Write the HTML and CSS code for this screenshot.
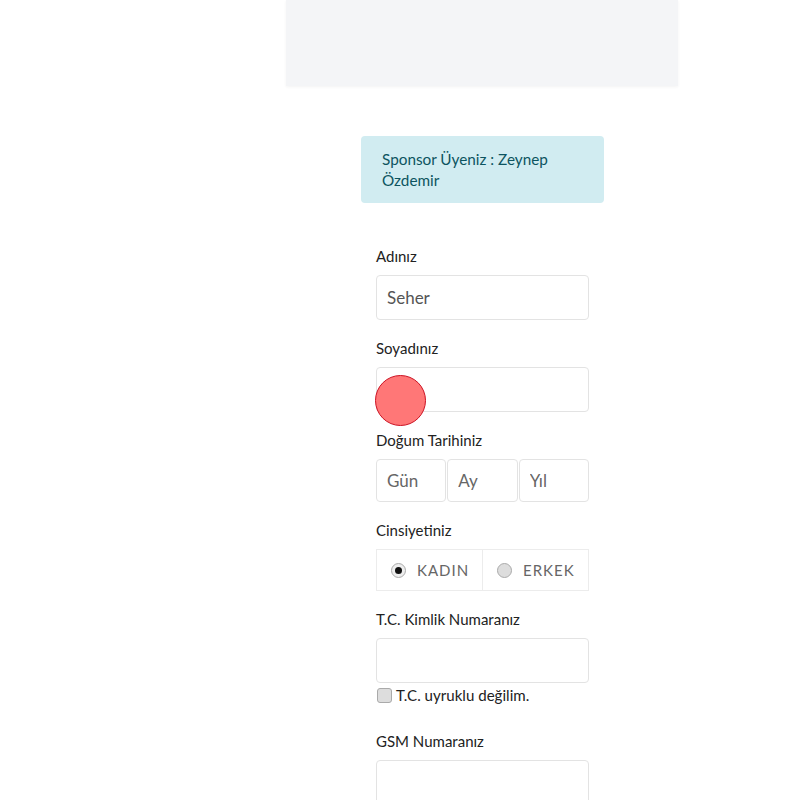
FILE: index.html
```html
<!DOCTYPE html>
<html lang="tr">
<head>
<meta charset="utf-8">
<title>Kayıt</title>
<link rel="stylesheet" href="styles.css">
</head>
<body>
<div class="header"></div>
<div class="container">
  <div class="alert">Sponsor Üyeniz : Zeynep Özdemir</div>
  <form class="form">
    <div class="field">
      <label class="label">Adınız</label>
      <input class="input" type="text" value="Seher">
    </div>
    <div class="field">
      <label class="label">Soyadınız</label>
      <input class="input" type="text">
    </div>
    <div class="field">
      <label class="label">Doğum Tarihiniz</label>
      <div class="date-row">
        <input class="input date" type="text" placeholder="Gün">
        <input class="input date" type="text" placeholder="Ay">
        <input class="input date" type="text" placeholder="Yıl">
      </div>
    </div>
    <div class="field">
      <label class="label">Cinsiyetiniz</label>
      <div class="radio-group">
        <div class="radio-opt"><span class="radio checked"></span><span class="radio-text">KADIN</span></div>
        <div class="radio-opt"><span class="radio"></span><span class="radio-text">ERKEK</span></div>
      </div>
    </div>
    <div class="field tc">
      <label class="label">T.C. Kimlik Numaranız</label>
      <input class="input" type="text">
      <div class="check-row"><span class="checkbox"></span><span class="check-text">T.C. uyruklu değilim.</span></div>
    </div>
    <div class="field">
      <label class="label">GSM Numaranız</label>
      <input class="input" type="text">
    </div>
  </form>
</div>
<div class="touch"></div>
</body>
</html>
```
FILE: styles.css
```css
* { box-sizing: border-box; }
body {
  margin: 0;
  background: #fff;
  font-family: "Lato", "Open Sans", sans-serif;
  color: #222;
}
.header {
  width: 392px;
  height: 86px;
  margin-left: 286px;
  background: #f4f5f7;
  box-shadow: 0 1px 3px rgba(0,0,0,0.05);
}
.container {
  width: 243px;
  margin: 50px 0 0 361px;
}
.alert {
  background: #d1ecf1;
  color: #0c5460;
  border-radius: 4px;
  padding: 13px 21px 12px;
  font-size: 15.3px;
  line-height: 21px;
  height: 67px;
}
.form {
  padding: 0 15px;
  margin-top: 43px;
}
.field {
  margin-bottom: 18px;
}
.label {
  display: block;
  font-size: 15px;
  line-height: 20px;
  margin-bottom: 9px;
  color: #222;
}
.input {
  display: block;
  width: 100%;
  height: 45px;
  border: 1px solid #e3e3e3;
  border-radius: 4px;
  padding: 0 10px;
  font-family: inherit;
  font-size: 17px;
  color: #555;
  background: #fff;
  outline: none;
}
.input::placeholder { color: #666; }
.date-row {
  display: flex;
  gap: 1px;
}
.input.date {
  flex: 1;
  height: 43px;
  min-width: 0;
}
.radio-group {
  display: flex;
  border: 1px solid #ececec;
  height: 42px;
}
.radio-opt {
  flex: 1;
  display: flex;
  align-items: center;
  padding-left: 14px;
}
.radio-opt + .radio-opt { border-left: 1px solid #ececec; }
.radio {
  width: 15px;
  height: 15px;
  border-radius: 50%;
  border: 1px solid #aaa;
  background: #ddd;
  margin-right: 11px;
  position: relative;
}
.radio.checked { background: #eee; }
.radio.checked::after {
  content: "";
  position: absolute;
  left: 3px; top: 3px;
  width: 7px; height: 7px;
  border-radius: 50%;
  background: #111;
}
.radio-text {
  font-size: 15px;
  letter-spacing: 1px;
  color: #666;
}
.tc .input { margin-bottom: 4px; }
.check-row {
  display: flex;
  align-items: center;
  gap: 4px;
  height: 16px;
  margin-bottom: 28px;
}
.checkbox {
  width: 15px;
  height: 15px;
  border: 1px solid #aaa;
  border-radius: 3px;
  background: #ddd;
  margin-left: 1px;
}
.check-text {
  font-size: 15.1px;
  color: #222;
}
.touch {
  position: absolute;
  left: 375px;
  top: 375px;
  width: 51px;
  height: 51px;
  border-radius: 50%;
  background: #ff7777;
  border: 1px solid #cc1122;
}
```
